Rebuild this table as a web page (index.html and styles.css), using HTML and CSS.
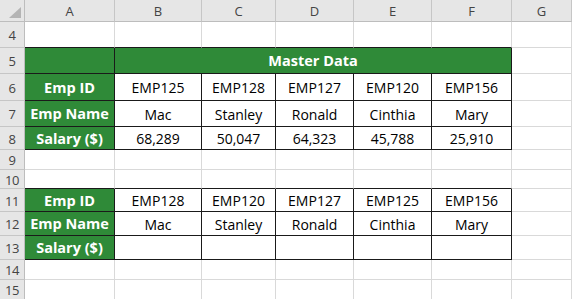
FILE: index.html
```html
<!DOCTYPE html>
<html>
<head>
<meta charset="utf-8">
<link rel="stylesheet" href="styles.css">
</head>
<body>
<div class="sheet">
  <div class="corner"></div>
  <div class="hd">A</div><div class="hd">B</div><div class="hd">C</div><div class="hd">D</div><div class="hd">E</div><div class="hd">F</div><div class="hd">G</div>

  <div class="rn">4</div>
  <div class="c bb"></div><div class="c bb"></div><div class="c bb"></div><div class="c bb"></div><div class="c bb"></div><div class="c bb"></div><div class="c"></div>

  <div class="rn">5</div>
  <div class="g"></div><div class="g master">Master Data</div><div class="c"></div>

  <div class="rn">6</div>
  <div class="g">Emp ID</div><div class="d">EMP125</div><div class="d">EMP128</div><div class="d">EMP127</div><div class="d">EMP120</div><div class="d">EMP156</div><div class="c"></div>

  <div class="rn">7</div>
  <div class="g">Emp Name</div><div class="d">Mac</div><div class="d">Stanley</div><div class="d">Ronald</div><div class="d">Cinthia</div><div class="d">Mary</div><div class="c"></div>

  <div class="rn">8</div>
  <div class="g">Salary ($)</div><div class="d">68,289</div><div class="d">50,047</div><div class="d">64,323</div><div class="d">45,788</div><div class="d">25,910</div><div class="c"></div>

  <div class="rn">9</div>
  <div class="c"></div><div class="c"></div><div class="c"></div><div class="c"></div><div class="c"></div><div class="c"></div><div class="c"></div>

  <div class="rn">10</div>
  <div class="c bb"></div><div class="c bb"></div><div class="c bb"></div><div class="c bb"></div><div class="c bb"></div><div class="c bb"></div><div class="c"></div>

  <div class="rn">11</div>
  <div class="g">Emp ID</div><div class="d">EMP128</div><div class="d">EMP120</div><div class="d">EMP127</div><div class="d">EMP125</div><div class="d">EMP156</div><div class="c"></div>

  <div class="rn">12</div>
  <div class="g">Emp Name</div><div class="d">Mac</div><div class="d">Stanley</div><div class="d">Ronald</div><div class="d">Cinthia</div><div class="d">Mary</div><div class="c"></div>

  <div class="rn">13</div>
  <div class="g">Salary ($)</div><div class="d"></div><div class="d"></div><div class="d"></div><div class="d"></div><div class="d"></div><div class="c"></div>

  <div class="rn">14</div>
  <div class="c"></div><div class="c"></div><div class="c"></div><div class="c"></div><div class="c"></div><div class="c"></div><div class="c"></div>

  <div class="rn">15</div>
  <div class="c"></div><div class="c"></div><div class="c"></div><div class="c"></div><div class="c"></div><div class="c"></div><div class="c"></div>
</div>
</body>
</html>
```

FILE: styles.css
```css
html, body {
  margin: 0;
  padding: 0;
  background: #ffffff;
}
.sheet {
  display: grid;
  width: 572px;
  grid-template-columns: 25px 90px 87px 74px 78px 78px 80px 60px;
  grid-template-rows: 22px 26px 26px 27px 26px 23px 20px 19px 23px 24px 24px 20px 20px;
  font-family: "Open Sans", "Liberation Sans", sans-serif;
  overflow: hidden;
}
.sheet > div {
  box-sizing: border-box;
  display: flex;
  align-items: center;
  justify-content: center;
  border-right: 1px solid #d9d9d9;
  border-bottom: 1px solid #d9d9d9;
  white-space: nowrap;
}
.corner {
  position: relative;
  background: #e6e6e6;
  border-right: 1px solid #bdbdbd !important;
  border-bottom: 1px solid #bdbdbd !important;
}
.corner::after {
  content: "";
  position: absolute;
  right: 3px;
  bottom: 3px;
  width: 12px;
  height: 11px;
  background: #b4b4b4;
  clip-path: polygon(100% 0, 100% 100%, 0 100%);
}
.hd {
  background: #e6e6e6;
  color: #444444;
  font-size: 13px;
  padding-top: 1px;
  border-right: 1px solid #c6c6c6 !important;
  border-bottom: 1px solid #bdbdbd !important;
}
.rn {
  background: #e6e6e6;
  color: #444444;
  font-size: 13px;
  letter-spacing: -0.5px;
  padding-top: 1px;
  border-right: 1px solid #bdbdbd !important;
  border-bottom: 1px solid #c6c6c6 !important;
}
.c {
  background: #ffffff;
}
.bb {
  border-bottom: 1px solid #1a1a1a !important;
}
.g {
  background: #2f8a38;
  color: #ffffff;
  font-weight: 700;
  font-size: 14.5px;
  border-right: 1px solid #1a1a1a !important;
  border-bottom: 1px solid #1a1a1a !important;
}
.master {
  grid-column: span 5;
}
.d {
  background: #ffffff;
  color: #000000;
  font-size: 14px;
  padding-top: 1px;
  border-right: 1px solid #1a1a1a !important;
  border-bottom: 1px solid #1a1a1a !important;
}
```
